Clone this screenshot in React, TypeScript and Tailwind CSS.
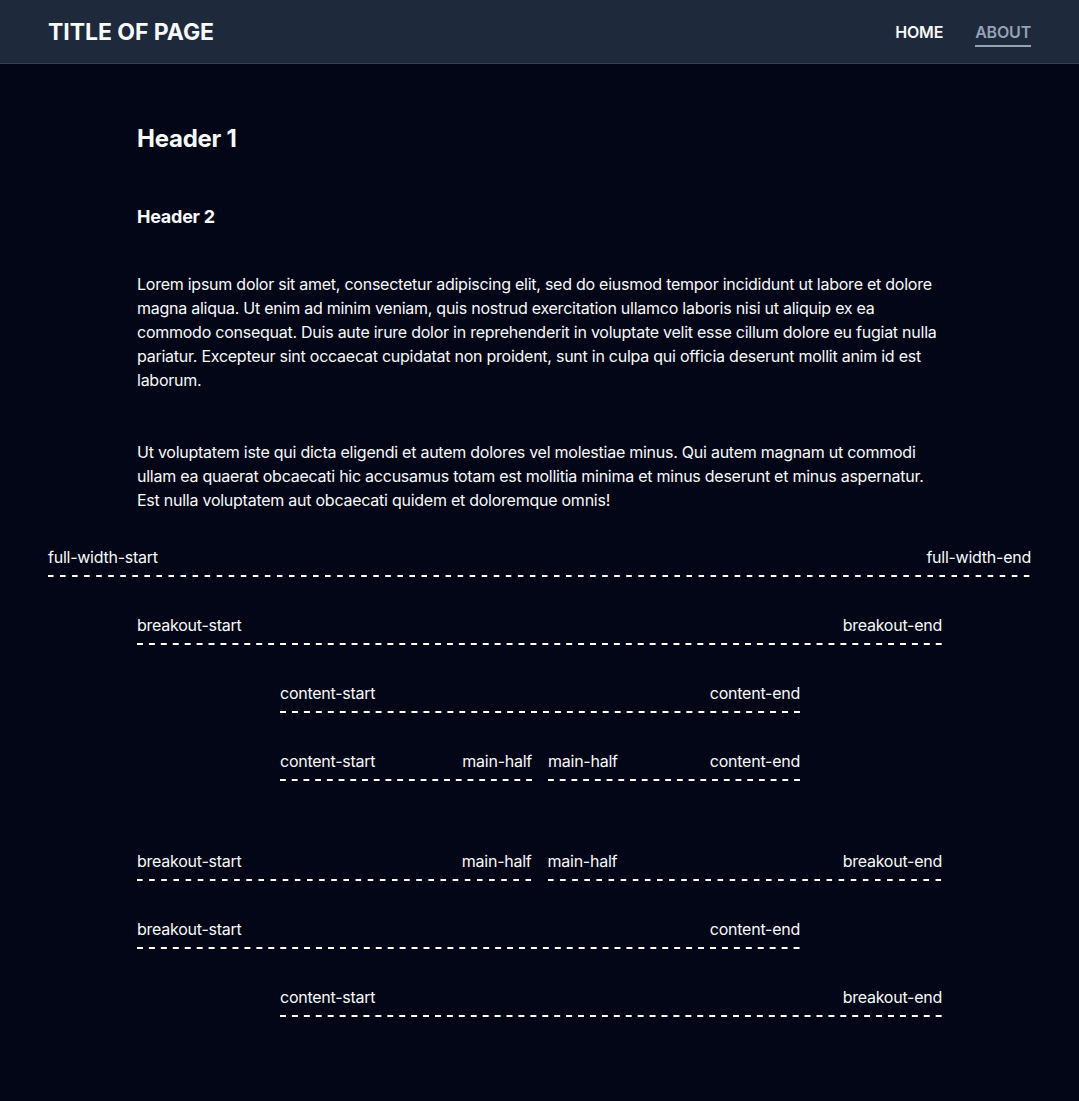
const font = { fontFamily: "Inter, 'Noto Sans', sans-serif" }

type RowProps = {
  readonly left: string
  readonly right: string
  readonly span: string
}

const Marker = ({ left, right }: { readonly left: string; readonly right: string }) => (
  <div className="text-base leading-6 tracking-[-0.25px]">
    <div className="flex justify-between">
      <span>{left}</span>
      <span>{right}</span>
    </div>
    <div className="mt-[6px] h-[2px] overflow-hidden">
      <div className="h-[2px] w-[calc(100%+6px)] bg-[linear-gradient(to_right,#ffffff_6px,transparent_6px)] bg-[length:12px_2px] bg-repeat-round" />
    </div>
  </div>
)

const Row = ({ left, right, span }: RowProps) => (
  <div className={span}>
    <Marker left={left} right={right} />
  </div>
)

export default function App() {
  return (
    <div className="min-h-[1101px] bg-[#020617] text-[#f8fafc]" style={font}>
      <header className="flex h-16 items-center justify-between border-b border-[#334155] bg-[#1e293b] px-12 pt-[2px]">
        <div className="text-[23px] font-bold tracking-[-0.05px]">TITLE OF PAGE</div>
        <nav className="flex gap-8 text-base font-semibold tracking-[-0.2px]">
          <a className="border-b-2 border-transparent pt-[2px] pb-[1px]">HOME</a>
          <a className="border-b-2 border-[#94a3b8] pt-[2px] pb-[1px] text-[#94a3b8]">ABOUT</a>
        </nav>
      </header>

      <main className="grid grid-cols-[89px_143px_520px_142px_89px] px-12 pt-[59px] pb-[84px]">
        <div className="col-start-2 col-end-5 tracking-[-0.25px]">
          <h1 className="text-2xl leading-8 font-bold">Header 1</h1>
          <h2 className="mt-12 text-lg leading-7 font-bold">Header 2</h2>
          <p className="mt-[41px] text-base leading-6">
            Lorem ipsum dolor sit amet, consectetur adipiscing elit, sed do eiusmod tempor incididunt ut labore et dolore magna aliqua. Ut enim ad minim veniam, quis nostrud exercitation ullamco laboris nisi ut aliquip ex ea commodo consequat. Duis aute irure dolor in reprehenderit in voluptate velit esse cillum dolore eu fugiat nulla pariatur. Excepteur sint occaecat cupidatat non proident, sunt in culpa qui officia deserunt mollit anim id est laborum.
          </p>
          <p className="mt-12 text-base leading-6">
            Ut voluptatem iste qui dicta eligendi et autem dolores vel molestiae minus. Qui autem magnam ut commodi ullam ea quaerat obcaecati hic accusamus totam est mollitia minima et minus deserunt et minus aspernatur. Est nulla voluptatem aut obcaecati quidem et doloremque omnis!
          </p>
        </div>

        <Row span="col-span-5 mt-[33px]" left="full-width-start" right="full-width-end" />
        <Row span="col-start-2 col-end-5 mt-9" left="breakout-start" right="breakout-end" />
        <Row span="col-start-3 col-end-4 mt-9" left="content-start" right="content-end" />
        <div className="col-start-3 col-end-4 mt-9 grid grid-cols-2 gap-4">
          <Marker left="content-start" right="main-half" />
          <Marker left="main-half" right="content-end" />
        </div>
        <div className="col-start-2 col-end-5 mt-[68px] grid grid-cols-2 gap-4">
          <Marker left="breakout-start" right="main-half" />
          <Marker left="main-half" right="breakout-end" />
        </div>
        <Row span="col-start-2 col-end-4 mt-9" left="breakout-start" right="content-end" />
        <Row span="col-start-3 col-end-5 mt-9" left="content-start" right="breakout-end" />
      </main>
    </div>
  )
}
